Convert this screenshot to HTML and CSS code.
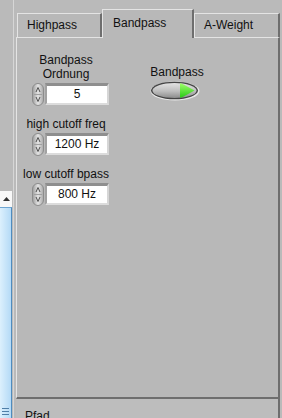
FILE: index.html
```html
<!DOCTYPE html>
<html lang="de">
<head>
    <meta charset="UTF-8">
    <title>Filter</title>
    <link rel="stylesheet" href="styles.css">
</head>
<body>
    <div class="side">
        <div class="side-btn">
            <svg width="7" height="4" viewBox="0 0 7 4"><path d="M0 4 L3.5 0 L7 4 Z" fill="#333"/></svg>
        </div>
        <div class="side-thumb"><span class="grip"></span></div>
    </div>

    <div class="main">
        <div class="tabs">
            <div class="tab tab-high">Highpass</div>
            <div class="tab tab-band active">Bandpass</div>
            <div class="tab tab-weight">A-Weight</div>
        </div>

        <div class="panel">
            <div class="controls">
                <div class="field">
                    <div class="label">Bandpass<br>Ordnung</div>
                    <div class="numeric">
                        <svg class="spin" width="12" height="23" viewBox="0 0 12 23">
                            <rect x="0.5" y="0.5" width="11" height="22" rx="5.5" fill="url(#spin-g)" stroke="#8c8c8c"/>
                            <path d="M4 9 L6 4.5 L8 9 M4 14 L6 18.5 L8 14" fill="none" stroke="#505050" stroke-width="1"/>
                            <path d="M2 11.5 H10" stroke="#a0a0a0"/>
                        </svg>
                        <span class="value">5</span>
                    </div>
                </div>
                <div class="field">
                    <div class="label">high cutoff freq</div>
                    <div class="numeric">
                        <svg class="spin" width="12" height="23" viewBox="0 0 12 23">
                            <rect x="0.5" y="0.5" width="11" height="22" rx="5.5" fill="url(#spin-g)" stroke="#8c8c8c"/>
                            <path d="M4 9 L6 4.5 L8 9 M4 14 L6 18.5 L8 14" fill="none" stroke="#505050" stroke-width="1"/>
                            <path d="M2 11.5 H10" stroke="#a0a0a0"/>
                        </svg>
                        <span class="value">1200 Hz</span>
                    </div>
                </div>
                <div class="field">
                    <div class="label">low cutoff bpass</div>
                    <div class="numeric">
                        <svg class="spin" width="12" height="23" viewBox="0 0 12 23">
                            <rect x="0.5" y="0.5" width="11" height="22" rx="5.5" fill="url(#spin-g)" stroke="#8c8c8c"/>
                            <path d="M4 9 L6 4.5 L8 9 M4 14 L6 18.5 L8 14" fill="none" stroke="#505050" stroke-width="1"/>
                            <path d="M2 11.5 H10" stroke="#a0a0a0"/>
                        </svg>
                        <span class="value">800 Hz</span>
                    </div>
                </div>
            </div>

            <div class="switch">
                <div class="label">Bandpass</div>
                <svg class="led" width="50" height="20" viewBox="0 0 50 20">
                    <defs>
                        <linearGradient id="spin-g" x1="0" y1="0" x2="1" y2="0">
                            <stop offset="0" stop-color="#9c9c9c"/>
                            <stop offset="0.5" stop-color="#e4e4e4"/>
                            <stop offset="1" stop-color="#a8a8a8"/>
                        </linearGradient>
                        <linearGradient id="led-g" x1="0" y1="0" x2="0" y2="1">
                            <stop offset="0" stop-color="#e2e2e2"/>
                            <stop offset="0.55" stop-color="#bdbdbd"/>
                            <stop offset="1" stop-color="#8c8c8c"/>
                        </linearGradient>
                        <linearGradient id="grn-g" x1="0" y1="0" x2="0" y2="1">
                            <stop offset="0" stop-color="#a6ff70"/>
                            <stop offset="1" stop-color="#22c811"/>
                        </linearGradient>
                        <clipPath id="led-clip">
                            <ellipse cx="24.5" cy="9.5" rx="22" ry="7.5"/>
                        </clipPath>
                    </defs>
                    <ellipse cx="25" cy="10" rx="24.5" ry="9.5" fill="#e8e8e8"/>
                    <ellipse cx="24.5" cy="9.5" rx="23.5" ry="8.8" fill="#454545"/>
                    <ellipse cx="24.5" cy="9.5" rx="22" ry="7.5" fill="url(#led-g)"/>
                    <path d="M30 1.5 L44.5 9.5 L30 17.5 Z" fill="url(#grn-g)" clip-path="url(#led-clip)"/>
                </svg>
            </div>
        </div>

        <div class="footer">Pfad</div>
    </div>
</body>
</html>
```

FILE: styles.css
```css
body {
    margin: 0;
    width: 282px;
    height: 418px;
    overflow: hidden;
    display: flex;
    background: #bababa;
    font-family: "Liberation Sans", Arial, sans-serif;
    font-size: 12px;
    color: #111;
}

/* scrollbar on the far left */
.side {
    width: 12px;
    margin-right: 4px;
    padding-top: 191px;
    display: flex;
    flex-direction: column;
    box-shadow: 1px 0 0 #bababa, 2px 0 0 #d6d6d6;
}
.side-btn {
    height: 16px;
    background: #f8f8f8;
    display: flex;
    justify-content: center;
    align-items: center;
}
.side-thumb {
    flex: 1;
    background: linear-gradient(90deg, #dcf0fd, #b4daf6);
    border-top: 1px solid #6fa6d2;
    border-right: 1px solid #4f8cbf;
    display: flex;
    flex-direction: column;
    justify-content: flex-end;
    align-items: center;
    padding-bottom: 3px;
}
.grip {
    width: 7px;
    height: 7px;
    background: repeating-linear-gradient(180deg, #4f7fa8 0 1px, transparent 1px 3px);
}

/* tab control */
.main {
    width: 264px;
    height: 418px;
    display: flex;
    flex-direction: column;
}
.tabs {
    flex-shrink: 0;
    display: flex;
    align-items: flex-end;
    height: 28px;
    margin-top: 9px;
    padding-left: 1px;
}
.tab {
    box-sizing: border-box;
    height: 24px;
    padding-left: 9px;
    line-height: 22px;
    background: #b8b8b8;
    border-top: 1px solid #e4e4e4;
    border-left: 1px solid #e4e4e4;
    border-right: 2px solid #6e6e6e;
}
.tab-high { width: 85px; }
.tab-band { width: 92px; }
.tab-weight { width: 86px; }
.tab.active {
    height: 29px;
    margin-bottom: -1px;
    line-height: 26px;
    padding-left: 10px;
    position: relative;
    z-index: 1;
}

.panel {
    flex-shrink: 0;
    box-sizing: border-box;
    height: 362px;
    background: #b8b8b8;
    border-top: 1px solid #e4e4e4;
    border-left: 1px solid #e4e4e4;
    border-right: 2px solid #6e6e6e;
    border-bottom: 2px solid #6e6e6e;
    display: flex;
    padding: 15px 0 0 3px;
}

.controls {
    width: 92px;
    display: flex;
    flex-direction: column;
    gap: 12px;
}
.field {
    display: flex;
    flex-direction: column;
}
.label {
    line-height: 14px;
    text-align: center;
    white-space: nowrap;
}
.numeric {
    display: flex;
    align-items: center;
    height: 22px;
    margin-top: 2px;
    margin-left: 12px;
}
.spin {
    display: block;
}
.value {
    box-sizing: border-box;
    width: 64px;
    height: 22px;
    margin-left: 1px;
    background: #fff;
    border-top: 3px solid #8e8e8e;
    border-left: 2px solid #a2a2a2;
    border-right: 2px solid #d6d6d6;
    border-bottom: 2px solid #dcdcdc;
    text-align: center;
    line-height: 17px;
}

.switch {
    width: 56px;
    margin-left: 37px;
    padding-top: 12px;
    display: flex;
    flex-direction: column;
    align-items: center;
}
.led {
    display: block;
    margin-top: 2px;
    margin-right: 4px;
}

.footer {
    flex: 1;
    min-height: 0;
    overflow: hidden;
    background: #bdbdbd;
    border-right: 2px solid #6e6e6e;
    padding: 10px 0 0 9px;
    line-height: 14px;
}
```
